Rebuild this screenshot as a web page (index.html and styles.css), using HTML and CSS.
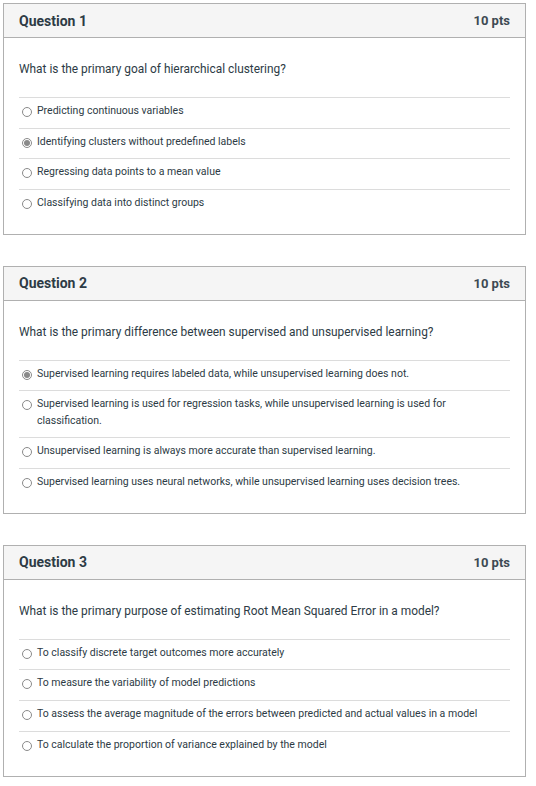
FILE: index.html
```html
<!DOCTYPE html>
<html>
<head>
<meta charset="utf-8">
<link rel="stylesheet" href="styles.css">
</head>
<body>
<div class="quiz">
  <section class="card">
    <header class="card-head">
      <h2 class="q-title">Question 1</h2>
      <span class="q-pts">10 pts</span>
    </header>
    <div class="card-body">
      <p class="q-text">What is the primary goal of hierarchical clustering?</p>
      <ul class="answers">
        <li class="answer"><span class="radio"></span><span class="label">Predicting continuous variables</span></li>
        <li class="answer"><span class="radio checked"></span><span class="label">Identifying clusters without predefined labels</span></li>
        <li class="answer"><span class="radio"></span><span class="label">Regressing data points to a mean value</span></li>
        <li class="answer"><span class="radio"></span><span class="label">Classifying data into distinct groups</span></li>
      </ul>
    </div>
  </section>

  <section class="card">
    <header class="card-head">
      <h2 class="q-title">Question 2</h2>
      <span class="q-pts">10 pts</span>
    </header>
    <div class="card-body">
      <p class="q-text">What is the primary difference between supervised and unsupervised learning?</p>
      <ul class="answers">
        <li class="answer"><span class="radio checked"></span><span class="label">Supervised learning requires labeled data, while unsupervised learning does not.</span></li>
        <li class="answer"><span class="radio"></span><span class="label">Supervised learning is used for regression tasks, while unsupervised learning is used for classification.</span></li>
        <li class="answer"><span class="radio"></span><span class="label">Unsupervised learning is always more accurate than supervised learning.</span></li>
        <li class="answer"><span class="radio"></span><span class="label">Supervised learning uses neural networks, while unsupervised learning uses decision trees.</span></li>
      </ul>
    </div>
  </section>

  <section class="card">
    <header class="card-head">
      <h2 class="q-title">Question 3</h2>
      <span class="q-pts">10 pts</span>
    </header>
    <div class="card-body">
      <p class="q-text">What is the primary purpose of estimating Root Mean Squared Error in a model?</p>
      <ul class="answers">
        <li class="answer"><span class="radio"></span><span class="label">To classify discrete target outcomes more accurately</span></li>
        <li class="answer"><span class="radio"></span><span class="label">To measure the variability of model predictions</span></li>
        <li class="answer"><span class="radio"></span><span class="label">To assess the average magnitude of the errors between predicted and actual values in a model</span></li>
        <li class="answer"><span class="radio"></span><span class="label">To calculate the proportion of variance explained by the model</span></li>
      </ul>
    </div>
  </section>
</div>
</body>
</html>
```

FILE: styles.css
```css
* { box-sizing: border-box; }

html, body {
  margin: 0;
  padding: 0;
  background: #ffffff;
}

body {
  font-family: Roboto, "Liberation Sans", Arial, sans-serif;
  color: #2d3b45;
}

.quiz {
  display: flex;
  flex-direction: column;
  gap: 31px;
  padding: 3px 10px 0 3px;
}

.card {
  border: 1px solid #b0b0b0;
  background: #fff;
}

.card-head {
  display: flex;
  justify-content: space-between;
  align-items: center;
  height: 34px;
  padding: 0 15px;
  background: #f5f5f5;
  border-bottom: 1px solid #b0b0b0;
}

.q-title {
  margin: 0;
  font-size: 14px;
  font-weight: 700;
  color: #2d3b45;
}

.q-pts {
  font-size: 13px;
  font-weight: 700;
  color: #3d4a53;
}

.card-body {
  padding: 21px 15px 14px;
}

.q-text {
  margin: 0 0 17px;
  font-size: 11.9px;
  line-height: 21px;
  color: #2d3b45;
}

.answers {
  list-style: none;
  margin: 0;
  padding: 0;
}

.answer {
  display: flex;
  align-items: flex-start;
  gap: 5px;
  border-top: 1px solid #dcdcdc;
  padding: 5px 0 8.4px 3px;
  font-size: 10.5px;
  line-height: 16.3px;
  color: #2d3b45;
}

.radio {
  flex: none;
  width: 10px;
  height: 10px;
  margin-top: 4px;
  border: 1px solid #8a8a8a;
  border-radius: 50%;
  background: #fff;
  display: flex;
  align-items: center;
  justify-content: center;
}

.radio.checked::after {
  content: "";
  width: 6px;
  height: 6px;
  border-radius: 50%;
  background: #8a8a8a;
}

.label {
  flex: 1;
}
```
